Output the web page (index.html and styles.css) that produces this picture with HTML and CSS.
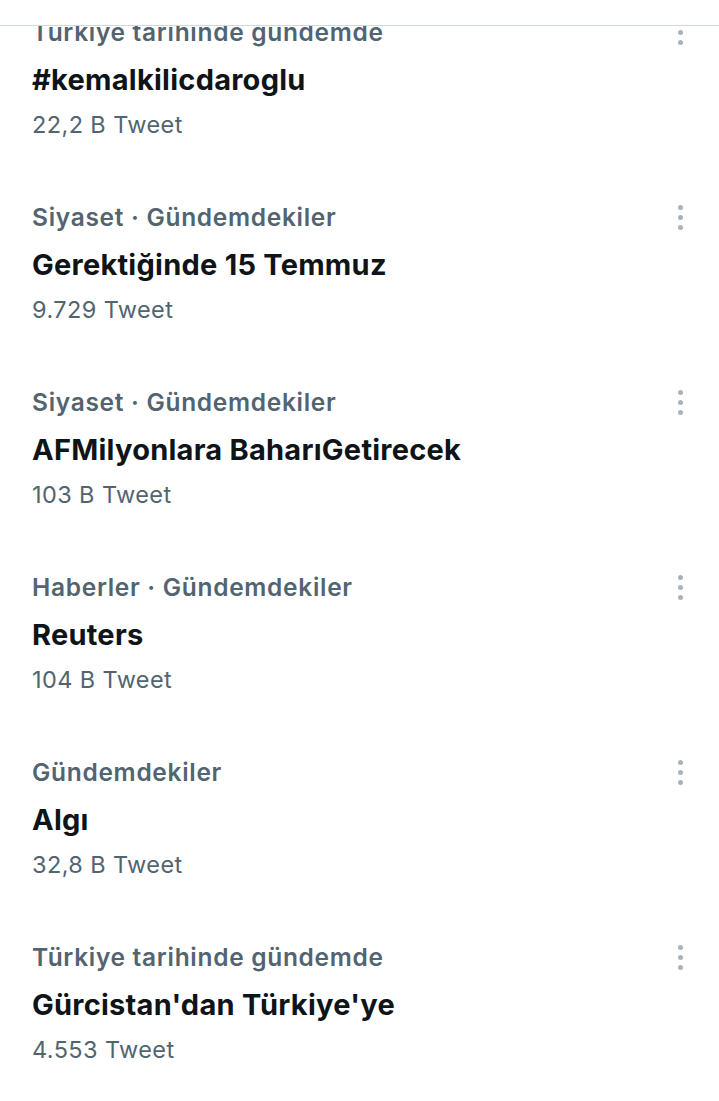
FILE: index.html
```html
<!DOCTYPE html>
<html lang="tr">
<head>
<meta charset="utf-8">
<title>Gündem</title>
<link rel="stylesheet" href="styles.css">
</head>
<body>
<div class="topbar"></div>
<ul class="trends">
  <li class="trend">
    <div class="text">
      <div class="cat">Türkiye tarihinde gündemde</div>
      <div class="title">#kemalkilicdaroglu</div>
      <div class="count">22,2 B Tweet</div>
    </div>
    <div class="more"><span></span><span></span><span></span></div>
  </li>
  <li class="trend">
    <div class="text">
      <div class="cat">Siyaset · Gündemdekiler</div>
      <div class="title">Gerektiğinde 15 Temmuz</div>
      <div class="count">9.729 Tweet</div>
    </div>
    <div class="more"><span></span><span></span><span></span></div>
  </li>
  <li class="trend">
    <div class="text">
      <div class="cat">Siyaset · Gündemdekiler</div>
      <div class="title">AFMilyonlara BaharıGetirecek</div>
      <div class="count">103 B Tweet</div>
    </div>
    <div class="more"><span></span><span></span><span></span></div>
  </li>
  <li class="trend">
    <div class="text">
      <div class="cat">Haberler · Gündemdekiler</div>
      <div class="title">Reuters</div>
      <div class="count">104 B Tweet</div>
    </div>
    <div class="more"><span></span><span></span><span></span></div>
  </li>
  <li class="trend">
    <div class="text">
      <div class="cat">Gündemdekiler</div>
      <div class="title">Algı</div>
      <div class="count">32,8 B Tweet</div>
    </div>
    <div class="more"><span></span><span></span><span></span></div>
  </li>
  <li class="trend">
    <div class="text">
      <div class="cat">Türkiye tarihinde gündemde</div>
      <div class="title">Gürcistan'dan Türkiye'ye</div>
      <div class="count">4.553 Tweet</div>
    </div>
    <div class="more"><span></span><span></span><span></span></div>
  </li>
</ul>
</body>
</html>
```
FILE: styles.css
```css
html, body {
  margin: 0;
  padding: 0;
  background: #ffffff;
}
body {
  font-family: Inter, "Noto Sans", sans-serif;
  color: #0f1419;
  overflow: hidden;
}
.topbar {
  position: fixed;
  top: 0;
  left: 0;
  right: 0;
  height: 25px;
  background: #ffffff;
  border-bottom: 1px solid #cfd9de;
  z-index: 2;
}
.trends {
  list-style: none;
  margin: -3px 0 0 0;
  padding: 0;
}
.trend {
  height: 185px;
  box-sizing: border-box;
  padding: 12px 0 0 32px;
  display: flex;
  justify-content: space-between;
}
.text {
  display: flex;
  flex-direction: column;
}
.cat {
  height: 46px;
  line-height: 46px;
  font-size: 24.5px;
  letter-spacing: 0.7px;
  font-weight: 600;
  color: #536471;
}
.title {
  height: 50px;
  line-height: 50px;
  font-size: 29px;
  letter-spacing: 0.25px;
  font-weight: 700;
  color: #0f1419;
}
.count {
  height: 40px;
  line-height: 40px;
  font-size: 23.5px;
  letter-spacing: 0.4px;
  font-weight: 400;
  color: #536471;
}
.more {
  width: 78px;
  height: 46px;
  display: flex;
  flex-direction: column;
  align-items: center;
  justify-content: center;
  gap: 5px;
}
.more span {
  width: 5px;
  height: 5px;
  border-radius: 50%;
  background: #a9b3ba;
}
```
